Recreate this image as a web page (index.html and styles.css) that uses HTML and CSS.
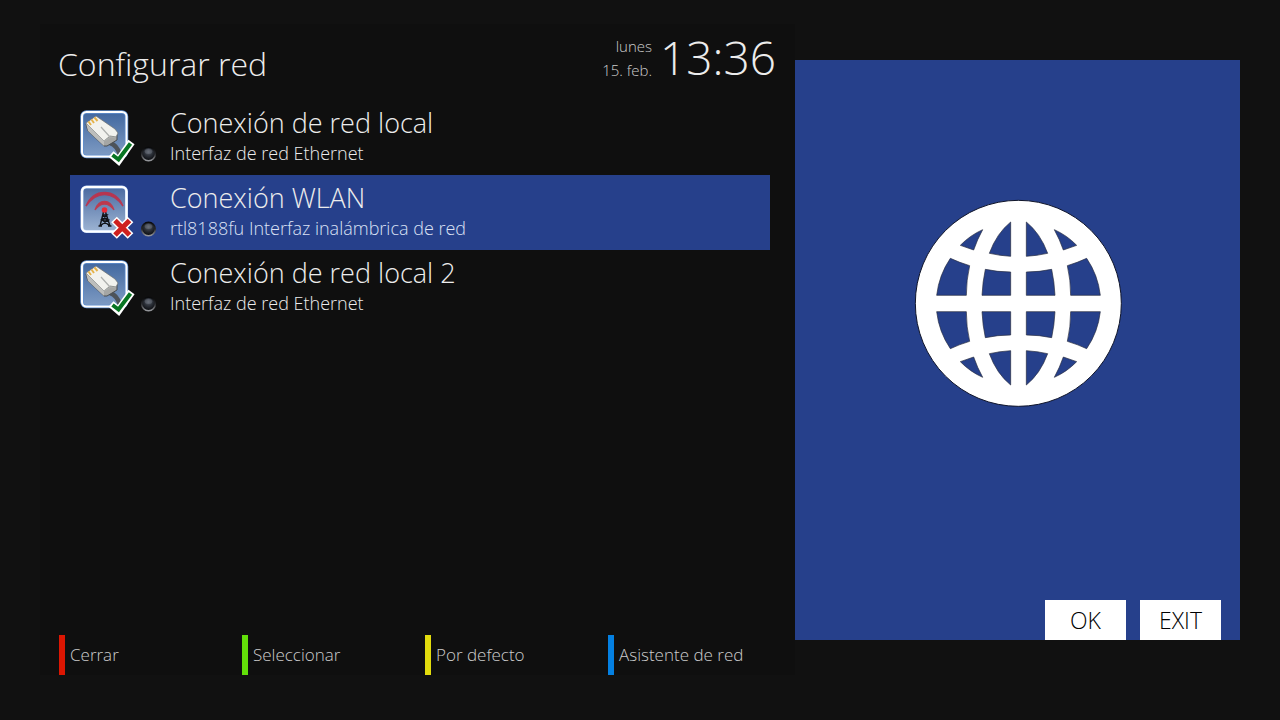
FILE: index.html
```html
<!DOCTYPE html>
<html lang="es">
<head>
<meta charset="utf-8">
<meta name="viewport" content="width=device-width, initial-scale=1">
<title>Configurar red</title>
<link rel="stylesheet" href="styles.css">
</head>
<body>
<svg class="defs" aria-hidden="true">
  <defs>
    <linearGradient id="tile" x1="0" y1="0" x2="0" y2="1"><stop offset="0" stop-color="#41679f"/><stop offset="1" stop-color="#7f9cc4"/></linearGradient>
    <linearGradient id="sky" x1="0" y1="0" x2="0" y2="1"><stop offset="0" stop-color="#4a6aa0"/><stop offset="1" stop-color="#9db4d3"/></linearGradient>
    <radialGradient id="orb" cx=".5" cy=".35" r=".6"><stop offset="0" stop-color="#555b66"/><stop offset=".5" stop-color="#2b2f37"/><stop offset="1" stop-color="#0b0d10"/></radialGradient>
    <linearGradient id="rim" x1="0" y1="0" x2="0" y2="1"><stop offset="0" stop-color="#08090b"/><stop offset=".5" stop-color="#2a2b2e"/><stop offset="1" stop-color="#97999d"/></linearGradient>
    <symbol id="lamp" viewBox="0 0 16 16">
      <circle cx="7.500" cy="8" r="6.800" fill="url(#orb)" stroke="url(#rim)" stroke-width="1.500"/>
      <ellipse cx="7.500" cy="5.500" rx="3.800" ry="2.500" fill="#a0a6b2" opacity=".25"/>
    </symbol>
    <symbol id="lan" viewBox="0 0 58 58">
      <rect x="2" y="3" width="44.500" height="44.500" rx="4.500" fill="url(#tile)" stroke="#5f8fd0" stroke-width="3.500"/>
      <rect x="2" y="3" width="44.500" height="44.500" rx="4.500" fill="none" stroke="#fff" stroke-width="2"/>
      <path d="M30 34 Q37 36 40 46" fill="none" stroke="#4d5359" stroke-width="4.500"/>
      <path d="M6 15 L8 22 L24 37 L27 37 L37 31 V25 L22 20Z" fill="#a5a6a4" stroke="#4b4f52" stroke-width="1"/>
      <path d="M6 14 L16 7 L35 20 L38 24 L36 28 L30 27 L24 32Z" fill="#f2f2ee" stroke="#6d706f" stroke-width=".7"/>
      <path d="M6 14 L24 32 V37 L8 22Z" fill="#bdbebc"/>
      <path d="M21 18 L30 28 M24 32 L31 28 L36 29" fill="none" stroke="#adafad" stroke-width="1.200"/>
      <path d="M8.500 12.500 L11 16 M11.500 10.500 L14 14 M14.500 8.500 L17.500 12" stroke="#e4b24a" stroke-width="2"/>
      <path d="M31 45 L38.500 51.500 L51.500 33" fill="none" stroke="#fff" stroke-width="7.500"/>
      <path d="M32.500 46 L38.500 50.500 L50.500 34.500" fill="none" stroke="#087523" stroke-width="4"/>
    </symbol>
    <symbol id="wlan" viewBox="0 0 58 58">
      <rect x="2" y="3" width="44.500" height="44.500" rx="4.500" fill="url(#sky)" stroke="#bdd5f5" stroke-width="3"/>
      <rect x="2" y="3" width="44.500" height="44.500" rx="4.500" fill="none" stroke="#fff" stroke-width="2"/>
      <path d="M6 22 Q12 8.500 24.500 8.500 Q37 8.500 43 22 Q35 10.500 24.500 10.500 Q14 10.500 6 22Z" fill="#d2283a" stroke="#c42c44" stroke-width="1.500" opacity=".85"/>
      <path d="M15 26 Q18 17.500 24.500 17.500 Q31 17.500 34 26 Q30 20 24.500 20 Q19 20 15 26Z" fill="#d2283a" stroke="#c9303f" stroke-width="1.300" opacity=".85"/>
      <path d="M23.500 28 L20 42 M25.500 28 L30 42 M22.500 31 H27 L22 36 H28 L20 42 M22.500 31 L28 36 H22 L30 42 M18.500 42 H22 M28 42 H31.500" fill="none" stroke="#101318" stroke-width="1.400"/>
      <circle cx="24.500" cy="26" r="2.800" fill="#ea2b36"/>
      <path d="M34 35.500 L50.500 52 M50.500 35.500 L34 52" stroke="#fff" stroke-width="8"/>
      <path d="M35 36.500 L49.500 51 M49.500 36.500 L35 51" stroke="#cf201e" stroke-width="5"/>
    </symbol>
  </defs>
</svg>
<div class="screen">
  <main class="panel">
    <header class="header">
      <h1 class="title">Configurar red</h1>
      <div class="date"><span>lunes</span><span>15. feb.</span></div>
      <time class="clock">13:36</time>
    </header>
    <ul class="list">
      <li><button class="row" type="button">
        <svg class="icon"><use href="#lan"/></svg><svg class="lamp"><use href="#lamp"/></svg>
        <span class="text"><span class="name">Conexión de red local</span><span class="detail">Interfaz de red Ethernet</span></span>
      </button></li>
      <li><button class="row selected" type="button">
        <svg class="icon"><use href="#wlan"/></svg><svg class="lamp"><use href="#lamp"/></svg>
        <span class="text"><span class="name">Conexión WLAN</span><span class="detail">rtl8188fu Interfaz inalámbrica de red</span></span>
      </button></li>
      <li><button class="row" type="button">
        <svg class="icon"><use href="#lan"/></svg><svg class="lamp"><use href="#lamp"/></svg>
        <span class="text"><span class="name">Conexión de red local 2</span><span class="detail">Interfaz de red Ethernet</span></span>
      </button></li>
    </ul>
    <footer class="actions">
      <button class="action red" type="button">Cerrar</button>
      <button class="action green" type="button">Seleccionar</button>
      <button class="action yellow" type="button">Por defecto</button>
      <button class="action blue" type="button">Asistente de red</button>
    </footer>
  </main>
  <aside class="side">
    <svg class="globe" viewBox="27 27 624 624" role="img" aria-label="Red">
      <defs>
        <g id="quarter">
          <path d="M166 166 Q195 136 233 119 Q217 148 206 180Z"/>
          <path d="M317 96 V199 Q285 197 253 190 Q275 130 317 96Z"/>
          <path d="M136 205 Q164 218 194 227 Q184 270 184 316 H95 Q102 255 136 205Z"/>
          <path d="M241 238 Q278 246 317 246 V316 H231 Q233 275 241 238Z"/>
        </g>
      </defs>
      <circle class="disc" cx="340" cy="340" r="309"/>
      <g class="holes">
        <use href="#quarter"/>
        <use href="#quarter" transform="translate(681 0) scale(-1 1)"/>
        <use href="#quarter" transform="translate(0 681) scale(1 -1)"/>
        <use href="#quarter" transform="translate(681 681) scale(-1 -1)"/>
      </g>
    </svg>
    <div class="keys">
      <button class="key" type="button">OK</button>
      <button class="key" type="button">EXIT</button>
    </div>
  </aside>
</div>
</body>
</html>
```
FILE: styles.css
```css
* { box-sizing: border-box; }
body {
  margin: 0;
  background: #111;
  color: #ececec;
  font-family: "Open Sans", "Noto Sans", sans-serif;
  font-weight: 300;
}
button { font: inherit; color: inherit; border: 0; background: none; padding: 0; }
.defs { position: absolute; width: 0; height: 0; }
.screen { display: flex; min-height: 100vh; padding: 24px 40px 45px; }
.panel { flex: 755 1 0; min-width: 0; display: flex; flex-direction: column; background: #0f0f0f; }
.header { display: flex; align-items: center; height: 76px; padding: 0 19px 0 18px; }
.title { flex: 1; margin: 0; padding-top: 4px; font-size: 32px; line-height: 44px; font-weight: 300; }
.date { display: flex; flex-direction: column; text-align: right; font-size: 15px; line-height: 24px; color: #ccc; padding-bottom: 8px; }
.clock { font-size: 46px; line-height: 56px; margin-left: 8px; padding-bottom: 10px; }
.list { list-style: none; margin: 0 25px 0 30px; padding: 0; }
.row { display: flex; align-items: flex-start; width: 100%; height: 75px; padding: 9px 10px 0; text-align: left; }
.selected { background: #26408b; }
.icon { width: 58px; height: 58px; flex: none; }
.lamp { width: 16px; height: 16px; flex: none; margin: 37px 13px 0 3px; }
.text { display: flex; flex-direction: column; }
.name { font-size: 27px; line-height: 28px; }
.detail { font-size: 18px; line-height: 32px; }
.selected .detail { color: #dbe2f5; }
.actions { display: grid; grid-template-columns: repeat(4, 1fr); margin-top: auto; padding: 0 4px 0 19px; }
.action { height: 40px; padding: 0 0 2px 5px; text-align: left; font-size: 17px; color: #ccc; border-left: 6px solid; white-space: nowrap; }
.red { border-left-color: #dc1602; }
.green { border-left-color: #62df09; }
.yellow { border-left-color: #e2dc0d; }
.blue { border-left-color: #0480e2; }
.side { flex: 445 1 0; min-width: 0; display: flex; flex-direction: column; align-items: center; margin: 36px 0 35px; padding-top: 139px; background: #26408b; }
.globe { width: 208px; height: 208px; }
.disc { fill: #fff; stroke: #10152a; stroke-width: 3; }
.holes { fill: #26408b; stroke: #252a3c; stroke-width: 2; }
.keys { display: flex; gap: 14px; margin-top: auto; align-self: flex-end; padding-right: 19px; }
.key { width: 81px; height: 40px; background: #fff; color: #000; font-size: 23px; }
```
